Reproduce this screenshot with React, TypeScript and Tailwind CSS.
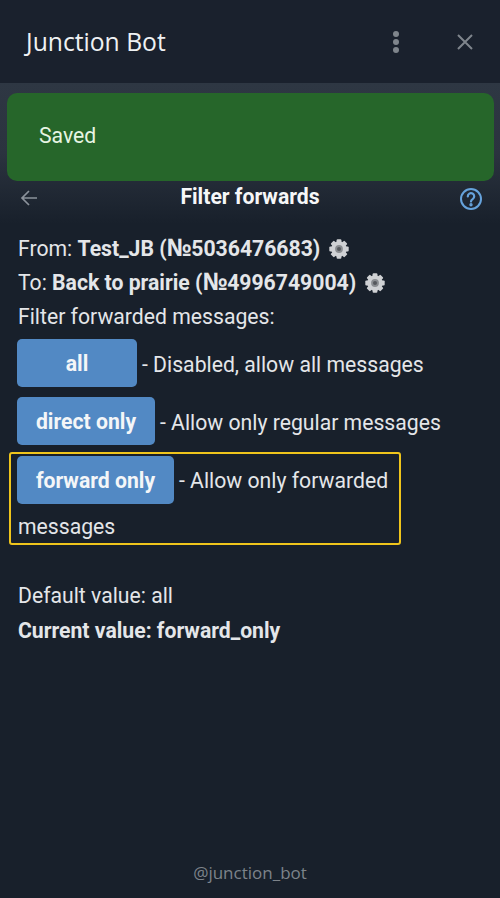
import React from "react";

function Gear({ className }: { className?: string }) {
  const teeth = [0, 45, 90, 135, 180, 225, 270, 315];
  return (
    <svg viewBox="0 0 20 20" className={className}>
      {teeth.map((a) => (
        <rect key={a} x="7.6" y="0.3" width="4.8" height="3.5" rx="1" fill="#cfd1d4" transform={`rotate(${a} 10 10)`} />
      ))}
      <circle cx="10" cy="10" r="7.8" fill="#cfd1d4" />
      <circle cx="10" cy="10" r="3.9" fill="#8a8d91" />
      <circle cx="10" cy="10" r="2" fill="#55585d" />
    </svg>
  );
}

function Btn({ children, className }: { children: React.ReactNode; className: string }) {
  return (
    <span className={`-ml-[1px] inline-flex h-[48px] shrink-0 items-center justify-center rounded-[5px] bg-[#5289c4] pt-[2px] align-middle text-[21.2px] font-bold text-[#f4f6f8] ${className}`}>
      {children}
    </span>
  );
}

export default function App() {
  return (
    <div className="relative flex h-[898px] w-[500px] flex-col overflow-hidden bg-[#18202b] font-['Roboto',sans-serif] text-[21.2px] text-[#e4e6e9]">
      <header className="flex h-[83px] shrink-0 items-center justify-between bg-[#1a212d] pl-[26px] pr-[26px]">
        <span className="font-['Open_Sans',sans-serif] text-[24.7px] font-medium text-[#eff1f3]">Junction Bot</span>
        <div className="flex items-center gap-[56px]">
          <svg viewBox="0 0 8 24" className="h-[24px] w-[8px]" fill="#7f858c">
            <circle cx="4" cy="4" r="3" />
            <circle cx="4" cy="12" r="3" />
            <circle cx="4" cy="20" r="3" />
          </svg>
          <svg viewBox="0 0 18 18" className="h-[18px] w-[18px]" stroke="#7f858c" strokeWidth="2" fill="none">
            <path d="M2 2 L16 16 M16 2 L2 16" />
          </svg>
        </div>
      </header>

      <div className="absolute left-[7px] top-[93px] z-10 flex h-[88px] w-[487px] items-center rounded-[10px] bg-[#26662a] pb-[2px] pl-[32px] text-[#e6f5e3]">
        Saved
      </div>

      <div className="flex h-[141px] shrink-0 items-end bg-gradient-to-b from-[#2e3743] via-[#2b333f] to-[#18202b] pb-[7px]">
        <div className="relative flex h-[40px] w-full items-center justify-between pl-[20px] pr-[17px]">
          <svg viewBox="0 0 18 18" className="mt-[2px] h-[18px] w-[18px]" stroke="#8b929b" strokeWidth="1.7" fill="none">
            <path d="M17 9 H2 M9 2 L2 9 L9 16" />
          </svg>
          <span className="ml-[3px] font-bold text-[#f6f7f8]">Filter forwards</span>
          <svg viewBox="0 0 24 24" className="mt-[4px] h-[24px] w-[24px]" fill="none" stroke="#66a3dc" strokeWidth="2">
            <circle cx="12" cy="12" r="10" />
            <path d="M8.8 9.4a3.2 3.2 0 1 1 4.9 2.7c-1 .6-1.7 1.2-1.7 2.5" strokeLinecap="round" strokeWidth="2.2" />
            <circle cx="12" cy="17.8" r="0.7" fill="#66a3dc" />
          </svg>
        </div>
      </div>

      <main className="flex flex-col pl-[18px] pr-[10px] pt-[8px] leading-[34px]">
        <div className="flex h-[34px] items-center">
          <span>From: <b>Test_JB (<span className="font-['Open_Sans',sans-serif] text-[24px] leading-none">№</span>5036476683)</b></span>
          <Gear className="ml-[9px] h-[20px] w-[20px]" />
        </div>
        <div className="flex h-[34px] items-center">
          <span>To: <b>Back to prairie (<span className="font-['Open_Sans',sans-serif] text-[24px] leading-none">№</span>4996749004)</b></span>
          <Gear className="ml-[9px] h-[20px] w-[20px]" />
        </div>
        <div className="h-[34px]">Filter forwarded messages:</div>
        <div className="mt-[5px] flex h-[48px] items-center">
          <Btn className="w-[120px]">all</Btn>
          <span className="ml-[5px] pt-[3px]">- Disabled, allow all messages</span>
        </div>
        <div className="mt-[10px] flex h-[48px] items-center">
          <Btn className="w-[138px]">direct only</Btn>
          <span className="ml-[5px] pt-[3px]">- Allow only regular messages</span>
        </div>
        <div className="-ml-[9px] mt-[7px] h-[93px] w-[392px] rounded-[3px] border-2 border-[#efc51c] pl-[7px] pt-[2px]">
          <div className="flex h-[48px] items-center">
            <Btn className="w-[157px]">forward only</Btn>
            <span className="ml-[5px] pt-[2px]">- Allow only forwarded</span>
          </div>
          <div className="h-[34px] leading-[46px]">messages</div>
        </div>
        <div className="mt-[33px] h-[35px] leading-[35px]">Default value: all</div>
        <div className="h-[35px] font-bold leading-[35px]">Current value: forward_only</div>
      </main>

      <footer className="absolute bottom-[13px] left-0 w-full text-center font-['Open_Sans',sans-serif] text-[17px] text-[#7d838a]">
        @junction_bot
      </footer>
    </div>
  );
}
